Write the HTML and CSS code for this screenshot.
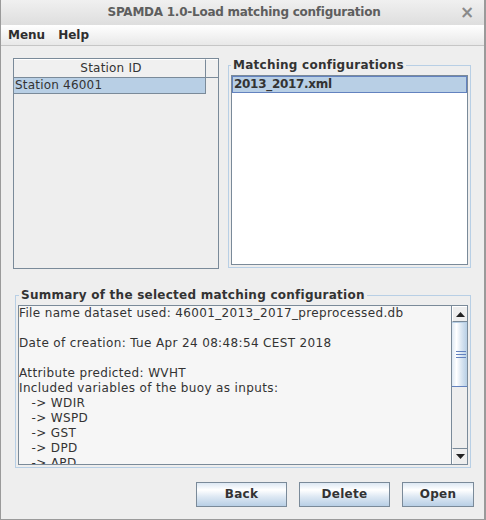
FILE: index.html
```html
<!DOCTYPE html>
<html>
<head>
<meta charset="utf-8">
<title>SPAMDA 1.0-Load matching configuration</title>
<link rel="stylesheet" href="styles.css">
</head>
<body>
<div class="window">
  <div class="titlebar">
    <span></span>
    <span class="title">SPAMDA 1.0-Load matching configuration</span>
    <span class="close">×</span>
  </div>
  <div class="menubar">
    <span class="menu">Menu</span>
    <span class="menu">Help</span>
  </div>
  <div class="content">
    <div class="top">
      <div class="table-pane">
        <div class="thead">
          <div class="th main">Station ID</div>
          <div class="th corner"></div>
        </div>
        <div class="tbody">
          <div class="tr sel">Station 46001</div>
        </div>
      </div>
      <div class="titled right">
        <div class="legend">Matching configurations</div>
        <div class="list">
          <div class="item sel">2013_2017.xml</div>
        </div>
      </div>
    </div>
    <div class="titled summary">
      <div class="legend">Summary of the selected matching configuration</div>
      <div class="scrollpane">
        <div class="textarea">File name dataset used: 46001_2013_2017_preprocessed.db

Date of creation: Tue Apr 24 08:48:54 CEST 2018

Attribute predicted: WVHT
Included variables of the buoy as inputs:
   -&gt; WDIR
   -&gt; WSPD
   -&gt; GST
   -&gt; DPD
   -&gt; APD</div>
        <div class="vscroll">
          <div class="sb-btn up">
            <svg width="9" height="5" viewBox="0 0 9 5"><polygon points="4.5,0 9,5 0,5" fill="#222"/></svg>
          </div>
          <div class="thumb">
            <div class="grip"></div>
            <div class="grip"></div>
            <div class="grip"></div>
          </div>
          <div class="track"></div>
          <div class="sb-btn down">
            <svg width="9" height="5" viewBox="0 0 9 5"><polygon points="0,0 9,0 4.5,5" fill="#222"/></svg>
          </div>
        </div>
      </div>
    </div>
    <div class="buttons">
      <div class="btn">Back</div>
      <div class="btn">Delete</div>
      <div class="btn open">Open</div>
    </div>
  </div>
</div>
</body>
</html>
```

FILE: styles.css
```css
html, body {
  margin: 0;
  padding: 0;
  background: #eeeeee;
}

.window {
  width: 486px;
  height: 520px;
  box-sizing: border-box;
  border-left: 1px solid #9a9a9a;
  border-right: 2px solid #9a9a9a;
  border-bottom: 1px solid #9a9a9a;
  background: #eeeeee;
  display: flex;
  flex-direction: column;
  font-family: "DejaVu Sans", sans-serif;
  color: #333333;
  overflow: hidden;
}

.titlebar {
  height: 25px;
  display: grid;
  grid-template-columns: 36px 1fr 36px;
  align-items: center;
  background: linear-gradient(#f0f0f0, #dedede);
  margin-left: -1px;
  margin-right: -2px;
  border-radius: 4px 4px 0 0;
}

.title {
  text-align: center;
  font-weight: bold;
  font-size: 12px;
  letter-spacing: -0.25px;
  color: #5e5e5e;
  line-height: 25px;
  position: relative;
  left: 1px;
}

.close {
  text-align: center;
  font-size: 17px;
  font-weight: bold;
  color: #8a8a8a;
  line-height: 25px;
  position: relative;
  left: -1px;
}

.menubar {
  height: 20px;
  border-bottom: 1px solid #c6c6c6;
  background: linear-gradient(#ffffff, #e8e8e8);
  display: flex;
  gap: 13px;
  padding-left: 7px;
  align-items: center;
}

.menu {
  font-size: 12px;
  font-weight: bold;
  color: #2e2e2e;
  line-height: 20px;
}

.content {
  padding-top: 12px;
  display: flex;
  flex-direction: column;
}

.top {
  display: flex;
  align-items: flex-start;
}

.table-pane {
  width: 206px;
  height: 211px;
  box-sizing: border-box;
  border: 1px solid #7a8a99;
  margin-left: 12px;
  background: #eeeeee;
}

.thead {
  display: flex;
  height: 19px;
  box-sizing: border-box;
}

.th {
  box-sizing: border-box;
  height: 19px;
  border-top: 1px solid #ffffff;
  border-bottom: 1px solid #7a8a99;
  border-right: 1px solid #7a8a99;
  background: #f0f0f0;
  font-size: 12px;
  line-height: 17px;
  text-align: center;
}

.th.main {
  width: 192px;
  padding-left: 3px;
  letter-spacing: 0.2px;
}

.th.corner {
  flex: 1;
  border-right: none;
}

.tbody {
  width: 192px;
  box-sizing: border-box;
  border-right: 1px solid #7a8a99;
  border-bottom: 1px solid #7a8a99;
}

.tr {
  height: 15px;
  font-size: 12px;
  line-height: 15px;
  padding-left: 1px;
  letter-spacing: 0.2px;
}

.sel {
  background: #b8cfe5;
}

.titled {
  box-sizing: border-box;
  border: 1px solid #b8cfe5;
  display: flex;
  flex-direction: column;
  padding: 0 2px 2px 2px;
}

.legend {
  align-self: flex-start;
  margin: -8px 0 0 1px;
  padding: 0 2px;
  background: #eeeeee;
  font-size: 12px;
  font-weight: bold;
  line-height: 15px;
  letter-spacing: 0.25px;
  color: #333333;
}

.titled.right {
  width: 243px;
  height: 203px;
  margin-left: 9px;
  margin-top: 7px;
}

.titled.right .legend {
  margin-left: 0;
}

.list {
  margin-top: 2px;
  flex: 1;
  border: 1px solid #7a8a99;
  background: #ffffff;
}

.item {
  height: 17px;
  box-sizing: border-box;
  border: 1px solid #6382bf;
  font-size: 12px;
  font-weight: bold;
  line-height: 15px;
  padding-left: 1px;
  letter-spacing: -0.3px;
}

.titled.summary {
  width: 456px;
  height: 173px;
  margin-left: 14px;
  margin-top: 26px;
}

.scrollpane {
  margin-top: 2px;
  flex: 1;
  display: flex;
  border: 1px solid #7a8a99;
  min-height: 0;
}

.textarea {
  flex: 1;
  background: #f6f6f6;
  font-size: 12px;
  line-height: 15px;
  letter-spacing: 0.36px;
  white-space: pre;
  overflow: hidden;
  color: #333333;
}

.vscroll {
  width: 16px;
  box-sizing: border-box;
  border-left: 1px solid #7a8a99;
  background: #eeeeee;
  display: flex;
  flex-direction: column;
}

.sb-btn {
  height: 16px;
  box-sizing: border-box;
  background: #eeeeee;
  border-top: 1px solid #ffffff;
  border-left: 1px solid #ffffff;
  display: flex;
  align-items: center;
  justify-content: center;
}

.sb-btn.up {
  border-bottom: 1px solid #7a8a99;
}

.sb-btn.down {
  border-top: 1px solid #7a8a99;
}

.thumb {
  height: 65px;
  box-sizing: border-box;
  border-bottom: 1px solid #6382bf;
  border-top: 1px solid #b8cfe5;
  background: linear-gradient(to right, #dde8f3 0%, #ffffff 30%, #dde8f3 60%, #b8cfe5 100%);
  display: flex;
  flex-direction: column;
  justify-content: center;
  align-items: center;
  gap: 2px;
}

.grip {
  width: 10px;
  height: 1px;
  background: #6382bf;
  margin-left: 2px;
}

.track {
  flex: 1;
  background: #eeeeee;
}

.buttons {
  display: flex;
  justify-content: flex-end;
  gap: 12px;
  margin-top: 14px;
  padding-right: 10px;
}

.btn {
  width: 91px;
  height: 25px;
  box-sizing: border-box;
  border: 1px solid #7a8a99;
  background: linear-gradient(#dde8f3 0%, #ffffff 30%, #dde8f3 60%, #b8cfe5 100%);
  font-size: 12px;
  font-weight: bold;
  line-height: 23px;
  text-align: center;
  color: #333333;
  letter-spacing: 0.3px;
}

.btn.open {
  width: 72px;
}
```
